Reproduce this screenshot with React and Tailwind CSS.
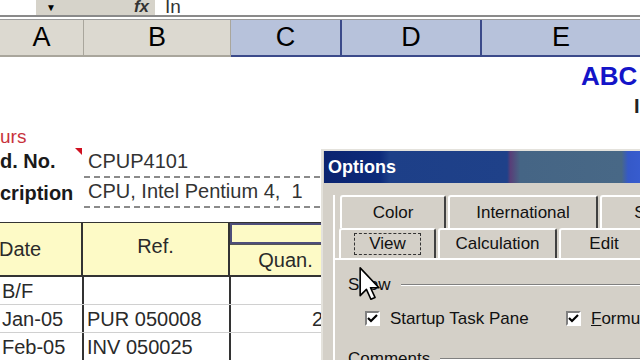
import React from "react";

function HeaderCell({ label, width, active, last }) {
  return (
    <div
      className={
        "flex items-center justify-center text-[27px] leading-none text-black border-b-2 " +
        (active
          ? "bg-[#b7c2db] border-b-[#3b4a8a] "
          : "bg-[#dcd9d0] border-b-[#a9a69c] ") +
        (last ? "flex-1 " : active ? "border-r-2 border-r-[#3b4a8a] " : "border-r border-r-[#a9a69c] ")
      }
      style={last ? undefined : { width }}
    >
      {label}
    </div>
  );
}

function DataRow({ a, b, c }) {
  return (
    <div className="flex h-[28px] border-b border-[#d0d0d0] text-[20px] text-[#2a2a2a]">
      <div className="w-[84px] border-r-2 border-[#333] pl-[2px] flex items-center">{a}</div>
      <div className="w-[147px] border-r-2 border-[#333] pl-[3px] flex items-center">{b}</div>
      <div className="w-[92px] flex items-center justify-end">{c}</div>
    </div>
  );
}

function Tab({ label, width, focus, first }) {
  return (
    <div
      className={
        "h-full shrink-0 flex items-center justify-center whitespace-nowrap rounded-t-[3px] border-t-2 border-l-2 border-r-2 border-t-white border-l-white border-r-[#404040] bg-[#d4d0c8] " +
        (first ? "" : "ml-[2px]")
      }
      style={{ width }}
    >
      {focus ? (
        <span className="border border-dashed border-[#333] px-[14px] leading-[20px]">{label}</span>
      ) : (
        <span>{label}</span>
      )}
    </div>
  );
}

function Check({ children }) {
  return (
    <div className="flex shrink-0 items-center gap-[10px] whitespace-nowrap">
      <div className="w-[15px] h-[15px] bg-white border-2 border-t-[#808080] border-l-[#808080] border-r-white border-b-white flex items-center justify-center">
        <svg width="11" height="11" viewBox="0 0 11 11">
          <path d="M1 5 L4 8 L10 2" stroke="#000" strokeWidth="2.2" fill="none" />
        </svg>
      </div>
      <span>{children}</span>
    </div>
  );
}

export default function App() {
  return (
    <div className="relative w-[640px] h-[360px] overflow-hidden bg-white font-['Liberation_Sans',Arial,sans-serif]">
      {/* formula bar */}
      <div className="flex h-[17px] border-b-2 border-[#8a8a8a] overflow-hidden">
        <div className="w-[36px] bg-white" />
        <div className="w-[119px] bg-[#d6d3ca] flex items-center">
          <span className="ml-[10px] text-[10px] leading-none">▼</span>
          <span className="ml-auto mr-[6px] text-[17px] italic font-bold leading-[13px] text-[#333] -mt-[2px]">fx</span>
        </div>
        <div className="flex-1 bg-white pl-[10px] text-[19px] leading-[13px] text-[#333]">In</div>
      </div>
      <div className="h-[2px]" />

      {/* column headers */}
      <div className="flex h-[38px] border-t border-[#9a9a9a]">
        <HeaderCell label="A" width={84} />
        <HeaderCell label="B" width={147} />
        <HeaderCell label="C" width={111} active />
        <HeaderCell label="D" width={140} active />
        <HeaderCell label="E" last active />
      </div>

      {/* sheet body */}
      <div className="h-[70px]">
        <div className="pl-[581px] pt-[6px] text-[26px] leading-[26px] font-bold text-[#1414c8]">ABC</div>
        <div className="pl-[634px] pt-[9px] text-[20px] leading-[16px] font-bold text-[#222]">I</div>
      </div>
      <div className="h-[21px] text-[19px] leading-[19px] text-[#c8323c]">urs</div>
      <div className="flex h-[30px] text-[20px] items-end">
        <div className="w-[84px] font-bold text-[#1a1a1a] pb-[2px] relative">
          d. No.
          <span className="absolute right-[2px] top-[2px] w-0 h-0 border-l-[7px] border-l-transparent border-t-[7px] border-t-[#d01020]" />
        </div>
        <div className="flex-1 border-b-2 border-dashed border-[#8a8a8a] pl-[4px] text-[#333]">CPUP4101</div>
      </div>
      <div className="flex h-[30px] text-[20px] items-end">
        <div className="w-[84px] font-bold text-[#1a1a1a]">cription</div>
        <div className="flex-1 border-b-2 border-dashed border-[#8a8a8a] pl-[4px] text-[#333]">CPU, Intel Pentium 4,&nbsp; 1</div>
      </div>
      <div className="h-[14px]" />

      {/* table header */}
      <div className="flex h-[55px] bg-[#fdfac6] border-t border-b-2 border-[#333] text-[20px] text-[#2a2a2a]">
        <div className="w-[84px] border-r-2 border-[#333] flex items-center -ml-[1px]">Date</div>
        <div className="w-[147px] border-r-2 border-[#333] flex items-center justify-center pb-[6px]">Ref.</div>
        <div className="w-[111px] flex flex-col">
          <div className="h-[27px] border-2 border-[#4e4e7a] border-r-0" />
          <div className="flex-1 flex items-center justify-center border-t border-[#555]">Quan.</div>
        </div>
      </div>
      <DataRow a="B/F" b="" c="" />
      <DataRow a="Jan-05" b="PUR 050008" c="2" />
      <DataRow a=" Feb-05" b="INV 050025" c="" />

      {/* Options dialog */}
      <div className="absolute left-[321px] top-[149px] w-[330px] h-[220px] bg-[#d4d0c8] border-l-2 border-t-2 border-[#e4e2dc] font-['Liberation_Sans',Tahoma,sans-serif]">
        <div className="ml-[1px] h-[32px] flex items-center pl-[4px] bg-[linear-gradient(90deg,#0b2470_0%,#0d2a7a_17%,#1d3f88_20%,#1f4189_56%,#583e78_57%,#456585_60%,#486886_91%,#3559c8_93%,#3a5fd4_100%)]">
          <span className="text-white font-bold text-[18px] leading-none">Options</span>
        </div>
        <div className="pl-[10px] pt-[12px] text-[17px] text-[#111]">
          <div className="border-l-2 border-white pl-[5px]">
            <div className="flex h-[33px]">
              <Tab label="Color" width={106} first />
              <Tab label="International" width={150} />
              <Tab label="Security" width={130} />
            </div>
            <div className="flex h-[30px] -ml-[1px]">
              <Tab label="View" width={97} focus first />
              <Tab label="Calculation" width={119} />
              <Tab label="Edit" width={90} />
            </div>
          </div>
          <div className="border-l-2 border-t-2 border-white h-[120px] pl-[13px]">
            <div className="flex items-center mt-[16px] h-[18px]">
              <span>Show</span>
              <div className="flex-1 ml-[10px] border-t border-[#808080] border-b border-b-white" />
            </div>
            <div className="flex mt-[12px] pl-[17px] text-[17px]">
              <div className="w-[201px] shrink-0">
                <Check>Startup Task Pane</Check>
              </div>
              <Check>
                <span className="underline">F</span>ormula bar
              </Check>
            </div>
            <div className="flex items-center mt-[18px] h-[18px]">
              <span>Comments</span>
              <div className="flex-1 ml-[10px] border-t border-[#808080] border-b border-b-white" />
            </div>
          </div>
        </div>
      </div>

      {/* mouse pointer */}
      <svg className="absolute left-[359px] top-[267px]" width="22" height="34" viewBox="0 0 12 19">
        <path
          d="M0.5 0.5 L0.5 16 L4 12.5 L6.5 18 L8.8 17 L6.3 11.6 L11 11.6 Z"
          fill="#fff"
          stroke="#000"
          strokeWidth="0.9"
          strokeLinejoin="round"
        />
      </svg>
    </div>
  );
}
